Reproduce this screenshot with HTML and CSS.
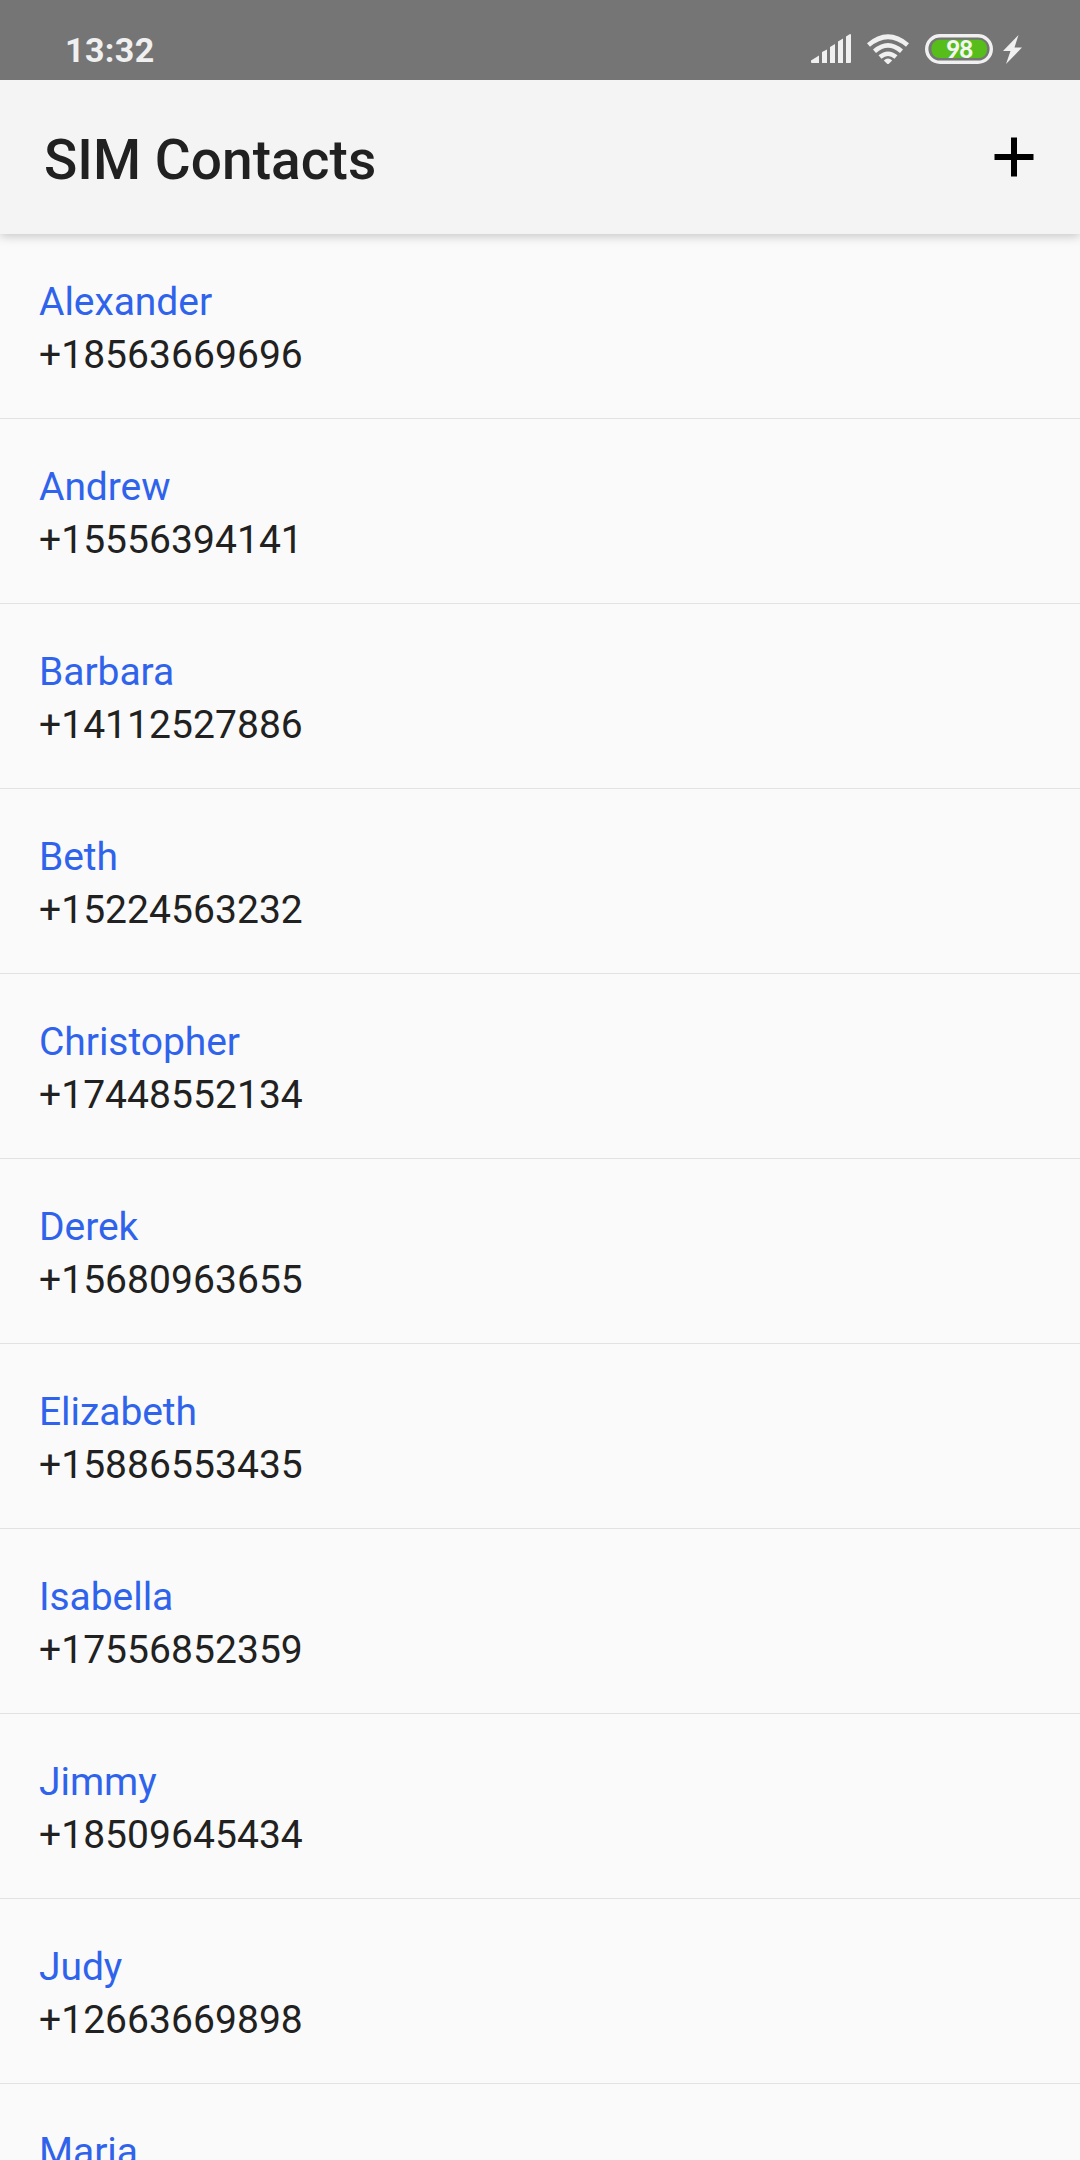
FILE: index.html
```html
<!DOCTYPE html>
<html lang="en">
<head>
<meta charset="utf-8">
<title>SIM Contacts</title>
<link rel="stylesheet" href="styles.css">
</head>
<body>
<div class="status">
  <span class="clock">13:32</span>
  <svg width="220" height="40" viewBox="806 30 220 40">
    <path class="ink" d="M811 60.500L819 55.500V63H812Q811 63 811 62ZM822 52L827 49.500V63H822ZM830 47L835 44V63H830ZM838 41.500L843 38.500V63H838ZM846 36.500L850 34Q851 34 851 35V62Q851 63 850 63H846Z"/>
    <g class="arcs"><path d="M868.500 45Q888 28.500 907.500 45"/><path d="M874.500 51.200Q888 39.500 901.500 51.200"/><path d="M880 57Q888 50.500 896 57"/></g>
    <path class="ink" d="M883.800 60.500Q888 56.500 892.200 60.500L888.600 64H887.400Z"/>
    <rect class="shell" x="926.700" y="35.700" width="64.600" height="26.600" rx="13.300"/>
    <rect class="charge" x="931.500" y="39.800" width="55.500" height="18.200" rx="8"/>
    <text class="level" x="959.200" y="57.700">98</text>
    <path class="ink" d="M1018.500 35L1003 51H1010.500L1006 64L1022 47.500H1014.500Z"/>
  </svg>
</div>
<header class="bar">
  <h1>SIM Contacts</h1>
  <svg class="add" width="40" height="40" viewBox="0 0 40 40"><path d="M20 .5V39.500M.5 20H39.500"/></svg>
</header>
<main>
  <div class="row"><div class="name">Alexander</div><div class="phone">+18563669696</div></div>
  <div class="row"><div class="name">Andrew</div><div class="phone">+15556394141</div></div>
  <div class="row"><div class="name">Barbara</div><div class="phone">+14112527886</div></div>
  <div class="row"><div class="name">Beth</div><div class="phone">+15224563232</div></div>
  <div class="row"><div class="name">Christopher</div><div class="phone">+17448552134</div></div>
  <div class="row"><div class="name">Derek</div><div class="phone">+15680963655</div></div>
  <div class="row"><div class="name">Elizabeth</div><div class="phone">+15886553435</div></div>
  <div class="row"><div class="name">Isabella</div><div class="phone">+17556852359</div></div>
  <div class="row"><div class="name">Jimmy</div><div class="phone">+18509645434</div></div>
  <div class="row"><div class="name">Judy</div><div class="phone">+12663669898</div></div>
  <div class="row"><div class="name">Maria</div></div>
</main>
</body>
</html>
```
FILE: styles.css
```css
html{overflow:hidden}
body{margin:0;height:2160px;overflow:hidden;background:#fafafa;font-family:Roboto,sans-serif;color:#212121}
.status{position:relative;z-index:1;height:80px;box-sizing:border-box;background:#757575;display:flex;justify-content:space-between;overflow:hidden;padding:30px 54px 0 65px}
.clock{font-weight:700;font-size:34px;line-height:40px;letter-spacing:.4px;color:#f0f0f0}
.ink{fill:#f0f0f0}
.arcs{fill:none;stroke:#f0f0f0;stroke-width:4.6}
.shell{fill:none;stroke:#f0f0f0;stroke-width:3.4}
.charge{fill:#56bd1b}
.level{font:900 24px Lato,sans-serif;letter-spacing:-1px;fill:#f4f4f4;text-anchor:middle}
.bar{height:154px;box-sizing:border-box;background:#f4f4f4;display:flex;justify-content:space-between;align-items:center;padding:0 46px 0 44px;box-shadow:0 2px 10px #00000038}
h1{font-size:55px;line-height:64px;font-weight:500;letter-spacing:.05px;margin:0;padding-top:6px}
.add{margin-bottom:1px}
.add path{stroke:#000;stroke-width:6}
.row{height:185px;box-sizing:border-box;border-bottom:1px solid #e2e2e2;padding:42px 39px 0;font-size:39px;line-height:53px}
.name{color:#3063ec;letter-spacing:-.06px}
.phone{letter-spacing:.05px}
```
